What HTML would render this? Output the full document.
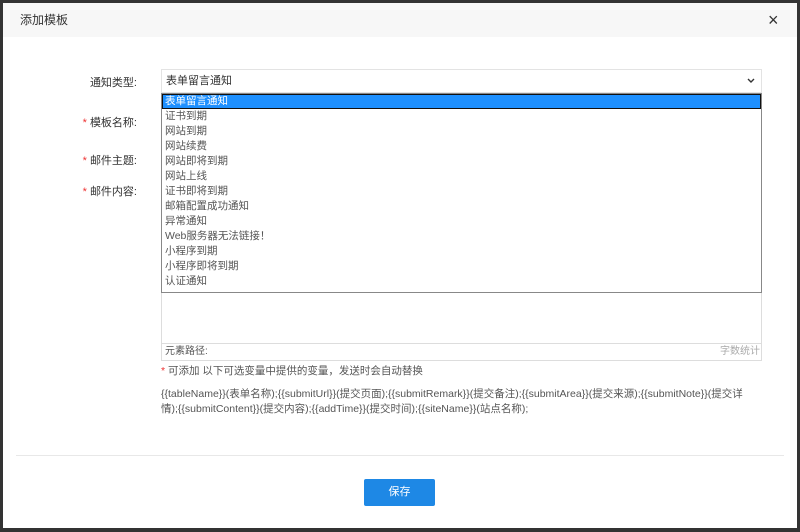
<!DOCTYPE html>
<html><head><meta charset="utf-8"><style>
*{margin:0;padding:0;box-sizing:border-box}
body{width:800px;height:532px;background:#fff;font-family:"Liberation Sans","Noto Sans CJK SC",sans-serif;position:relative;overflow:hidden;color:#333}
.frame{position:absolute;left:0;top:0;width:800px;height:532px;border:3px solid #333;border-bottom-width:4px}
.hdr{position:absolute;left:3px;top:3px;width:794px;height:34px;background:#f7f7f7;font-size:12px;line-height:34px;padding-left:17px;color:#333}
.x{position:absolute;left:768px;top:10px;font-size:18px;line-height:20px;color:#333}
.lab{position:absolute;font-size:11px;color:#333;text-align:right;width:120px;left:17px}
.lab b{color:#e33;font-weight:normal;margin-right:3px}
.sel{position:absolute;left:161px;top:69px;width:601px;height:24px;border:1px solid #e3e3e3;font-size:11px;line-height:22px;padding-left:4px}
.sel svg{position:absolute;right:6px;top:8px}
.ta{position:absolute;left:161px;top:93px;width:601px;height:268px;border:1px solid #ddd}
.list{position:absolute;left:161px;top:93px;width:601px;height:200px;border:1px solid #888;background:#fff;font-size:10.5px;color:#555}
.list div{height:15px;line-height:15px;padding-left:3px}
.list .on{background:#1e90ff;color:#fff;border:1px solid #111;height:15px;line-height:13px;padding-left:2px}
.bar{position:absolute;left:162px;top:343px;width:599px;height:17px;border-top:1px solid #ddd;font-size:10px;line-height:16px;color:#555;padding-left:3px}
.bar span{position:absolute;right:1px;color:#aaa}
.hint{position:absolute;left:161px;top:363px;font-size:10.5px;color:#555}
.hint b{color:#e33;font-weight:normal}
.vars{position:absolute;left:161px;top:387px;width:640px;font-size:10.5px;line-height:15px;color:#555;white-space:nowrap}
.sep{position:absolute;left:16px;top:455px;width:768px;height:1px;background:#e8e8e8}
.btn{position:absolute;left:364px;top:479px;width:71px;height:27px;background:#1e88e5;color:#fff;font-size:11px;line-height:27px;text-align:center;border-radius:2px}
</style></head><body>
<div class="hdr">添加模板</div>
<div class="x">×</div>
<div class="lab" style="top:74px">通知类型:</div>
<div class="lab" style="top:114px"><b>*</b>模板名称:</div>
<div class="lab" style="top:152px"><b>*</b>邮件主题:</div>
<div class="lab" style="top:183px"><b>*</b>邮件内容:</div>
<div class="sel">表单留言通知<svg width="8" height="6" viewBox="0 0 8 6"><path d="M1 1L4 4L7 1" stroke="#333" stroke-width="1.4" fill="none"/></svg></div>
<div class="ta"></div>
<div class="list">
<div class="on">表单留言通知</div><div>证书到期</div><div>网站到期</div><div>网站续费</div><div>网站即将到期</div><div>网站上线</div><div>证书即将到期</div><div>邮箱配置成功通知</div><div>异常通知</div><div>Web服务器无法链接！</div><div>小程序到期</div><div>小程序即将到期</div><div>认证通知</div>
</div>
<div class="bar">元素路径:<span>字数统计</span></div>
<div class="hint"><b>*</b> 可添加 以下可选变量中提供的变量，发送时会自动替换</div>
<div class="vars">{{tableName}}(表单名称);{{submitUrl}}(提交页面);{{submitRemark}}(提交备注);{{submitArea}}(提交来源);{{submitNote}}(提交详<br>情);{{submitContent}}(提交内容);{{addTime}}(提交时间);{{siteName}}(站点名称);</div>
<div class="sep"></div>
<div class="btn">保存</div>
<div class="frame"></div>
</body></html>
